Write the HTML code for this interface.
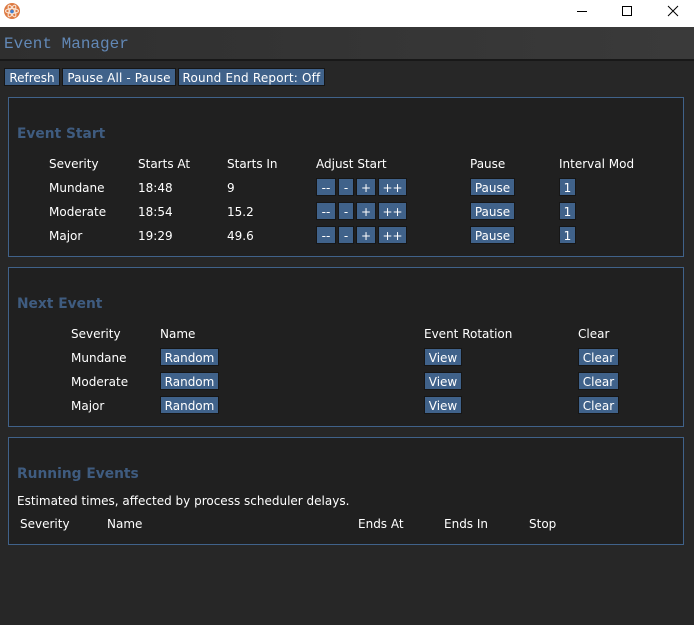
<!DOCTYPE html>
<html><head><meta charset="utf-8"><title>Event Manager</title>
<style>
html,body{margin:0;padding:0;width:694px;height:625px;overflow:hidden;background:#272727;}
body{position:relative;font-family:"DejaVu Sans","Liberation Sans",sans-serif;font-size:12px;color:#fff;}
.a{position:absolute;white-space:nowrap;line-height:18px;margin-top:1px;}
.b{position:absolute;box-sizing:border-box;height:18px;padding-top:1px;background:#40628a;border:1px solid #161616;color:#fff;text-align:center;line-height:16px;white-space:nowrap;}
.box{position:absolute;box-sizing:border-box;left:8px;width:676px;background:#202020;border:1px solid #40628a;}
.h{position:absolute;left:17px;margin-top:1px;font-weight:bold;font-size:13.8px;color:#3f5c80;line-height:18px;white-space:nowrap;}
</style></head><body>
<div style="position:absolute;left:0;top:0;width:694px;height:27px;background:#fff"></div>
<svg style="position:absolute;left:4px;top:3px" width="16" height="16" viewBox="0 0 16 16"><circle cx="8" cy="8" r="8" fill="#dd7a42"/><g fill="none" stroke="#f8e2d2" stroke-width="1.1"><ellipse cx="8" cy="8" rx="6.5" ry="2.4" transform="rotate(60 8 8)"/><ellipse cx="8" cy="8" rx="6.5" ry="2.4" transform="rotate(-60 8 8)"/><ellipse cx="8" cy="8" rx="6.5" ry="2.4"/></g><circle cx="8" cy="8.5" r="1.8" fill="#3f7fd0"/></svg>
<svg style="position:absolute;left:577px;top:5px" width="110" height="12" viewBox="0 0 110 12" fill="none" stroke="#000" stroke-width="1"><path d="M0 6.5H10"/><path d="M45.5 1.5h9v9h-9z"/><path d="M91 1l10 10M101 1L91 11"/></svg>
<div style="position:absolute;left:0;top:27px;width:694px;height:32px;background:linear-gradient(to right,#2f2f2f,#3a3a3a);"></div>
<div style="position:absolute;left:0;top:59px;width:694px;height:2px;background:#181818;"></div>
<div class="a" style="left:4px;top:34px;font-family:'Liberation Mono',monospace;font-size:16px;color:#6288b6;">Event Manager</div>

<div class="b" style="left:4px;top:68px;width:56px">Refresh</div>
<div class="b" style="left:62px;top:68px;width:114px;letter-spacing:.12px">Pause All - Pause</div>
<div class="b" style="left:178px;top:68px;width:147px;letter-spacing:.19px">Round End Report: Off</div>

<div class="box" style="top:97px;height:160px"></div>
<div class="h" style="top:124px">Event Start</div>
<div class="a" style="left:49px;top:154px">Severity</div>
<div class="a" style="left:138px;top:154px">Starts At</div>
<div class="a" style="left:227px;top:154px">Starts In</div>
<div class="a" style="left:316px;top:154px">Adjust Start</div>
<div class="a" style="left:470px;top:154px">Pause</div>
<div class="a" style="left:559px;top:154px">Interval Mod</div>

<div class="a" style="left:49px;top:178px">Mundane</div>
<div class="a" style="left:138px;top:178px">18:48</div>
<div class="a" style="left:227px;top:178px">9</div>
<div class="b" style="left:316px;top:178px;width:20px">--</div>
<div class="b" style="left:338px;top:178px;width:16px">-</div>
<div class="b" style="left:356px;top:178px;width:20px">+</div>
<div class="b" style="left:378px;top:178px;width:29px">++</div>
<div class="b" style="left:470px;top:178px;width:45px">Pause</div>
<div class="b" style="left:559px;top:178px;width:17px">1</div>

<div class="a" style="left:49px;top:202px">Moderate</div>
<div class="a" style="left:138px;top:202px">18:54</div>
<div class="a" style="left:227px;top:202px">15.2</div>
<div class="b" style="left:316px;top:202px;width:20px">--</div>
<div class="b" style="left:338px;top:202px;width:16px">-</div>
<div class="b" style="left:356px;top:202px;width:20px">+</div>
<div class="b" style="left:378px;top:202px;width:29px">++</div>
<div class="b" style="left:470px;top:202px;width:45px">Pause</div>
<div class="b" style="left:559px;top:202px;width:17px">1</div>

<div class="a" style="left:49px;top:226px">Major</div>
<div class="a" style="left:138px;top:226px">19:29</div>
<div class="a" style="left:227px;top:226px">49.6</div>
<div class="b" style="left:316px;top:226px;width:20px">--</div>
<div class="b" style="left:338px;top:226px;width:16px">-</div>
<div class="b" style="left:356px;top:226px;width:20px">+</div>
<div class="b" style="left:378px;top:226px;width:29px">++</div>
<div class="b" style="left:470px;top:226px;width:45px">Pause</div>
<div class="b" style="left:559px;top:226px;width:17px">1</div>

<div class="box" style="top:267px;height:160px"></div>
<div class="h" style="top:294px">Next Event</div>
<div class="a" style="left:71px;top:324px">Severity</div>
<div class="a" style="left:160px;top:324px">Name</div>
<div class="a" style="left:424px;top:324px">Event Rotation</div>
<div class="a" style="left:578px;top:324px">Clear</div>

<div class="a" style="left:71px;top:348px">Mundane</div>
<div class="b" style="left:160px;top:348px;width:59px">Random</div>
<div class="b" style="left:424px;top:348px;width:38px">View</div>
<div class="b" style="left:578px;top:348px;width:41px">Clear</div>

<div class="a" style="left:71px;top:372px">Moderate</div>
<div class="b" style="left:160px;top:372px;width:59px">Random</div>
<div class="b" style="left:424px;top:372px;width:38px">View</div>
<div class="b" style="left:578px;top:372px;width:41px">Clear</div>

<div class="a" style="left:71px;top:396px">Major</div>
<div class="b" style="left:160px;top:396px;width:59px">Random</div>
<div class="b" style="left:424px;top:396px;width:38px">View</div>
<div class="b" style="left:578px;top:396px;width:41px">Clear</div>

<div class="box" style="top:437px;height:108px"></div>
<div class="h" style="top:464px">Running Events</div>
<div class="a" style="left:17px;top:491px">Estimated times, affected by process scheduler delays.</div>
<div class="a" style="left:20px;top:514px">Severity</div>
<div class="a" style="left:107px;top:514px">Name</div>
<div class="a" style="left:358px;top:514px">Ends At</div>
<div class="a" style="left:444px;top:514px">Ends In</div>
<div class="a" style="left:529px;top:514px">Stop</div>
</body></html>
